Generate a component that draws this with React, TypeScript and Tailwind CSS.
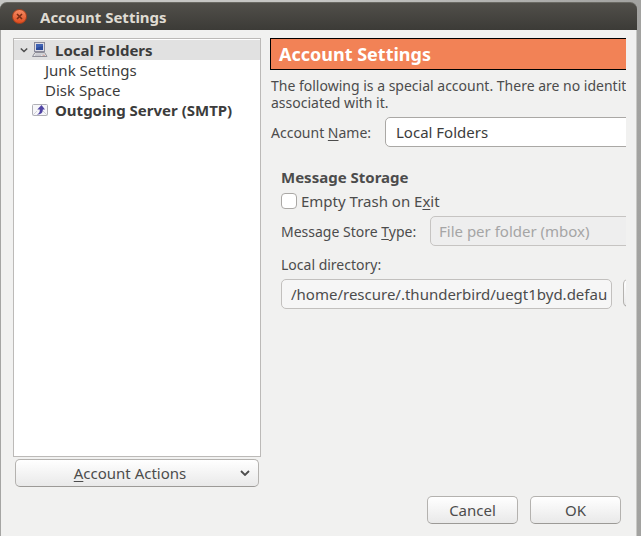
import { useState } from "react";

const BUTTON =
  "rounded-[5px] border border-[#b4b2af] border-b-[#9c9a97] bg-linear-to-b from-white to-[#e9e9e9] text-[#4c4c4c]";

const FIELD = "h-[30px] rounded-[5px] border text-[15px]";

function Chevron({ className }: { className?: string }) {
  return (
    <svg viewBox="0 0 10 6" className={className} fill="none" stroke="#4c4c4c" strokeWidth="1.8">
      <path d="M1 1 L5 5 L9 1" />
    </svg>
  );
}

function ComputerIcon() {
  return (
    <svg width="16" height="16" viewBox="0 0 16 16">
      <rect x="2.5" y="0.5" width="10" height="9" fill="#dcdce4" stroke="#8a8a9a" />
      <rect x="4" y="2" width="7" height="6" fill="#2b4b9c" />
      <path d="M4 2h7v2L4 6z" fill="#3f62b4" />
      <path d="M3 10.500h9.500l2.500 4H0.500z" fill="#e6e6e8" stroke="#8f8f98" />
      <path d="M3.500 12h8.500M3 13.300h6" stroke="#b4b4bd" strokeWidth="0.8" />
      <path d="M10.500 13.300h2.500" stroke="#c78a80" strokeWidth="0.8" />
    </svg>
  );
}

function OutgoingIcon() {
  return (
    <svg width="16" height="16" viewBox="0 0 16 16">
      <rect x="0.5" y="2.500" width="15" height="11" rx="1" fill="#f6f6f9" stroke="#b0b0b6" />
      <path d="M1 13l4-4M15 13l-4-4" stroke="#d0d0d8" fill="none" />
      <path
        d="M9.500 3L13 7.500h-2.200c0.200 3-1.800 5-6 5.300 2.200-1.200 3.200-2.800 3-5.300H5.300z"
        fill="#5044a4"
      />
    </svg>
  );
}

function AccountTree() {
  const [open, setOpen] = useState(true);

  return (
    <div className="min-h-0 flex-1 border border-[#bcbab8] bg-white">
      <ul className="pt-px text-[15px] leading-5 whitespace-nowrap text-[#3c3c3c]">
        <li className="flex items-center bg-[#e1e1e1] pl-[6px] font-bold">
          <button aria-label="Toggle Local Folders" onClick={() => setOpen(!open)} className="mr-1 w-2">
            <Chevron className="h-[6px] w-2" />
          </button>
          <ComputerIcon />
          <span className="ml-[7px]">Local Folders</span>
        </li>
        {open && (
          <>
            <li className="pl-[31px]">Junk Settings</li>
            <li className="pl-[31px]">Disk Space</li>
          </>
        )}
        <li className="flex items-center pl-[18px] font-bold">
          <OutgoingIcon />
          <span className="ml-[7px]">Outgoing Server (SMTP)</span>
        </li>
      </ul>
    </div>
  );
}

function SettingsPanel() {
  const [name, setName] = useState("Local Folders");
  const [emptyTrash, setEmptyTrash] = useState(false);

  return (
    <div className="min-w-0 flex-1 overflow-hidden">
      <div className="w-[440px] text-[14px]">
        <h1 className="flex h-8 items-center border border-black bg-[#f28256] px-2 text-[18px] font-bold text-white">
          Account Settings
        </h1>
        <p className="mt-[7px] pl-px leading-[17px]">
          The following is a special account. There are no identities associated with it.
        </p>

        <div className="mt-[6px] flex items-center pl-px">
          <label htmlFor="name" className="w-[114px]">
            Account <u className="underline-offset-2">N</u>ame:
          </label>
          <input
            id="name"
            value={name}
            onChange={(e) => setName(e.target.value)}
            className={`${FIELD} flex-1 border-[#aaa8a5] bg-white px-[10px] text-[#3c3c3c]`}
          />
        </div>

        <div className="pt-5 pl-[11px]">
          <h2 className="text-[15px] leading-5 font-bold">Message Storage</h2>
          <label className="mt-1 flex items-center gap-1 text-[15px] leading-5">
            <input
              type="checkbox"
              checked={emptyTrash}
              onChange={(e) => setEmptyTrash(e.target.checked)}
              className="size-4 appearance-none rounded-[4px] border border-[#aaa8a5] bg-white checked:bg-[#f28256]"
            />
            <span>
              Empty Trash on E<u className="underline-offset-2">x</u>it
            </span>
          </label>

          <div className="mt-[5px] flex items-center">
            <label htmlFor="store" className="w-[149px]">
              Message Store <u className="underline-offset-2">T</u>ype:
            </label>
            <select
              id="store"
              disabled
              className={`${FIELD} flex-1 appearance-none border-[#c6c4c2] bg-[#eeeeee] px-2 text-[#a5a5a5]`}
            >
              <option>File per folder (mbox)</option>
            </select>
          </div>

          <label htmlFor="directory" className="mt-[9px] block leading-5">
            Local directory:
          </label>
          <div className="mt-1 flex gap-[11px]">
            <input
              id="directory"
              readOnly
              value="/home/rescure/.thunderbird/uegt1byd.defau"
              className={`${FIELD} w-[331px] shrink-0 border-[#c2c0be] bg-[#f6f6f6] pr-1 pl-[9px]`}
            />
            <button aria-label="Browse" className={`${BUTTON} h-7 flex-1`} />
          </div>
        </div>
      </div>
    </div>
  );
}

export default function App() {
  return (
    <div className="flex h-screen min-h-[420px] flex-col bg-linear-to-r from-[#c6c6c4] from-50% to-[#a2a2a0] pt-[2px] pr-1 font-['Noto_Sans',sans-serif] text-[#4c4c4c]">
      <header className="flex h-7 shrink-0 items-center gap-[13px] rounded-t-[7px] border-t border-[#6a6963] bg-linear-to-b from-[#514f4a] to-[#3c3b37] pl-3">
        <button
          aria-label="Close"
          className="flex size-[15px] items-center justify-center rounded-full border border-[#a8401c] bg-linear-to-b from-[#f58a62] to-[#df4b1b]"
        >
          <svg width="7" height="7" viewBox="0 0 7 7" stroke="#7a2c14" strokeWidth="1.6">
            <path d="M1 1l5 5M6 1L1 6" />
          </svg>
        </button>
        <span className="text-[15px] leading-5 font-bold text-[#dfdbd2]">Account Settings</span>
      </header>

      <main className="flex min-h-0 flex-1 flex-col border-x border-l-[#a5a5a3] border-r-[#c9c9c6] bg-[#f1f1f0] pt-2 pr-[10px] pb-3 pl-3">
        <div className="flex min-h-0 flex-1 gap-[9px]">
          <div className="flex w-[248px] shrink-0 flex-col">
            <AccountTree />
            <button className={`${BUTTON} mx-[2px] mt-[2px] flex h-7 items-center pr-2 text-[15px]`}>
              <span className="flex-1 pl-1">
                <u className="underline-offset-2">A</u>ccount Actions
              </span>
              <Chevron className="h-[6px] w-[10px]" />
            </button>
          </div>
          <SettingsPanel />
        </div>
        <footer className="mt-[9px] flex justify-end gap-3 pr-[5px] text-[15px]">
          <button className={`${BUTTON} h-7 w-[91px]`}>Cancel</button>
          <button className={`${BUTTON} h-7 w-[91px]`}>OK</button>
        </footer>
      </main>
    </div>
  );
}
